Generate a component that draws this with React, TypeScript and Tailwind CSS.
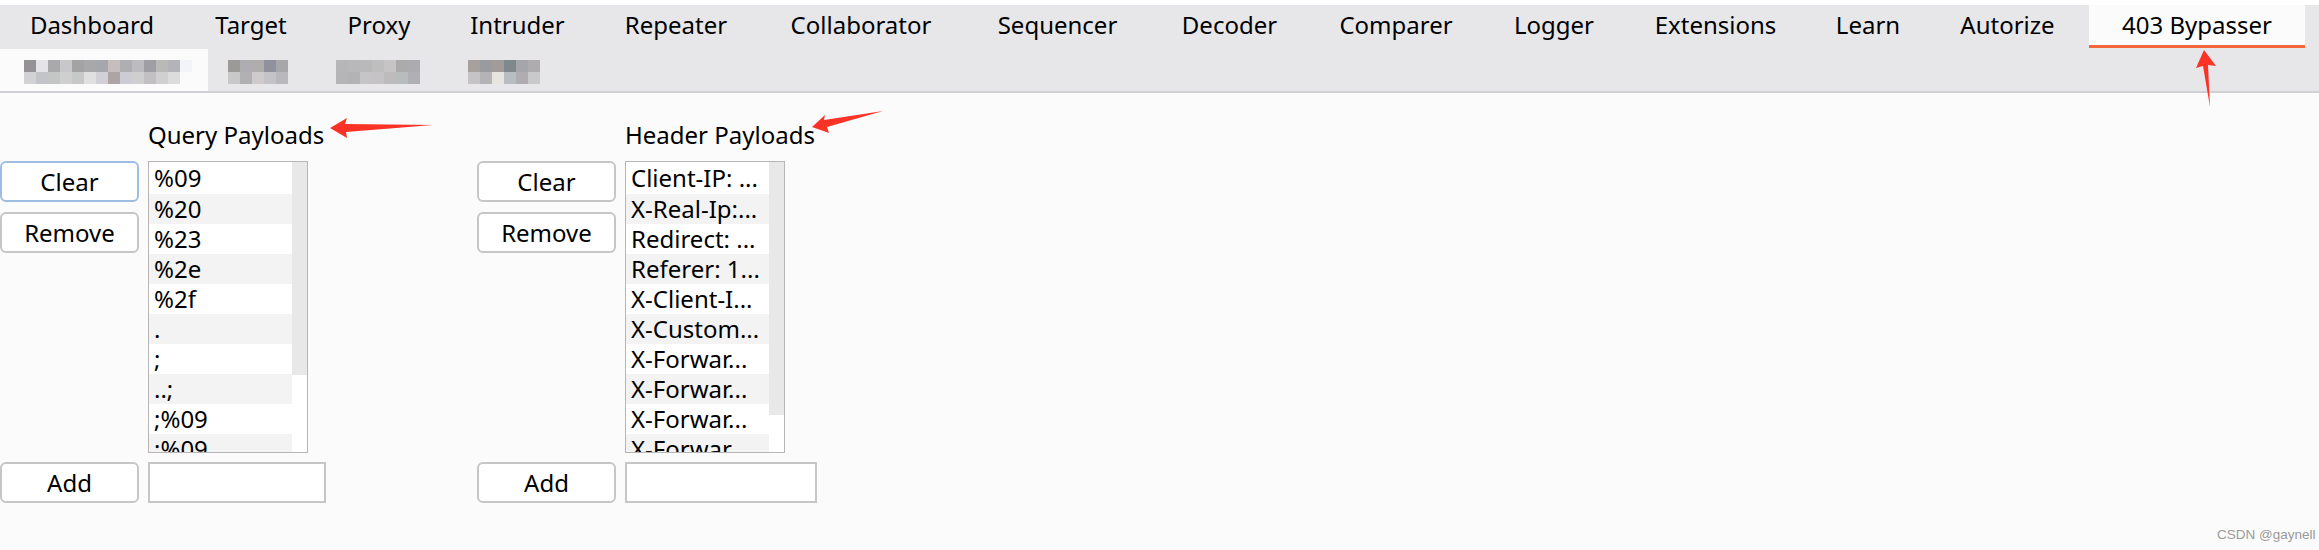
const font = "font-['Noto_Sans',sans-serif]";
const tabs: [string, string][] = [
  ["Dashboard", "w-[184px]"], ["Target", "w-[134px]"], ["Proxy", "w-[122px]"], ["Intruder", "w-[155px]"],
  ["Repeater", "w-[162px]"], ["Collaborator", "w-[208px]"], ["Sequencer", "w-[185px]"], ["Decoder", "w-[159px]"],
  ["Comparer", "w-[174px]"], ["Logger", "w-[142px]"], ["Extensions", "w-[181px]"], ["Learn", "w-[124px]"], ["Autorize", "w-[155px]"],
];
const query = ["%09", "%20", "%23", "%2e", "%2f", ".", ";", "..;", ";%09", ";%09"];
const header = ["Client-IP: ...", "X-Real-Ip:...", "Redirect: ...", "Referer: 1...", "X-Client-I...", "X-Custom...", "X-Forwar...", "X-Forwar...", "X-Forwar...", "X-Forwar"];

function Btn({ label, focus }: { label: string; focus?: boolean }) {
  return (
    <button className={focus
      ? "w-[139px] h-[41px] bg-white border-2 border-[#9dbde3] rounded-[6px] text-[24px] leading-none text-black"
      : "w-[139px] h-[41px] bg-white border-2 border-[#c8c5c6] rounded-[6px] text-[24px] leading-none text-black"}>
      {label}
    </button>
  );
}

function Panel({ title, items, focus, inputW, scroll }: { title: string; items: string[]; focus?: boolean; inputW: string; scroll: string }) {
  return (
    <div className="flex flex-col">
      <div className="ml-[148px] h-[68px] pt-[23px] text-[24px] leading-[38px] text-black whitespace-nowrap">{title}</div>
      <div className="flex gap-[9px]">
        <div className="flex flex-col gap-[10px] h-[292px]">
          <Btn label="Clear" focus={focus} />
          <Btn label="Remove" />
        </div>
        <div className="w-[160px] h-[292px] border border-[#b9b5b7] bg-white flex overflow-hidden">
          <div className="w-[143px] h-full overflow-hidden shrink-0">
            {items.map((t, i) => (
              <div key={i} className={i % 2 ? "h-[30px] bg-[#f3f3f3] pl-[5px] text-[24px] leading-[30px] text-black whitespace-nowrap" : "h-[30px] first:h-[32px] first:pt-[1px] bg-white pl-[5px] text-[24px] leading-[30px] text-black whitespace-nowrap"}>{t}</div>
            ))}
          </div>
          <div className="flex-1"><div className={scroll + " bg-[#e8e8e9]"} /></div>
        </div>
      </div>
      <div className="flex gap-[9px] mt-[9px]">
        <Btn label="Add" />
        <div className={inputW + " h-[41px] bg-white border-2 border-[#c8c5c6]"} />
      </div>
    </div>
  );
}

function Mosaic({ cols, cells }: { cols: string; cells: string[] }) {
  return (
    <div className={cols + " grid auto-rows-[12px]"}>
      {cells.map((c, i) => <div key={i} style={{ background: c }} />)}
    </div>
  );
}

const m1 = ["#949295","#e3e3e8","#a9a8ab","#c8c8ca","#a3a3a3","#a8a8aa","#a6a7ac","#c4bfbd","#aeaeb3","#bcbcbe","#9f9ea3","#b9b9b8","#b3b3b8","#f3f4f9",
  "#d2d1d3","#c3c4c9","#c4c5c5","#cfcfd0","#c7c8c8","#e1e0e1","#d0d0d6","#aca5a4","#cccdd4","#cfcfd0","#c2c0c2","#d0d0d0","#dcdcdc","#fbfbfb"];
const m2 = ["#9b9a98","#aeaeb2","#b2adad","#8f929d","#a7a7a9","#c8c8c8","#b1b1b3","#cfcbcc","#c3c3c8","#b9b9bb"];
const m3 = ["#b6b6b8","#b8b8ba","#b9b9bc","#bebebf","#c6c4c5","#ababac","#acacb0","#b5b5b7","#b3b3b5","#c5c5c7","#c5c3c5","#bdbbbb","#b8bcbc","#b0b0b4"];
const m4 = ["#a6a19f","#999b9f","#a29c98","#7f888c","#a5a6ab","#afacb0","#c5c3c5","#b4b4b6","#e8e5e1","#b8bdc2","#b0adb0","#c9c9cb"];

export default function App() {
  return (
    <div className={font + " relative w-[2319px] h-[550px] overflow-hidden bg-[#fbfbfb] text-black"}>
      <div className="h-[5px] bg-white" />
      <div className="h-[88px] bg-[#e7e7ea] border-b-2 border-[#cfcfd4]">
        <div className="flex h-[44px]">
          {tabs.map(([t, w]) => (
            <div key={t} className={w + " h-[40px] flex items-center justify-center text-[24px] leading-none whitespace-nowrap"}>{t}</div>
          ))}
          <div className="ml-[4px] w-[216px] h-[43px] pb-[1px] bg-[#fbfbfb] border-b-[3px] border-[#f2663c] flex items-center justify-center text-[24px] leading-none whitespace-nowrap">403 Bypasser</div>
        </div>
        <div className="flex h-[42px]">
          <div className="w-[208px] bg-[#fbfbfb] pl-[24px] pt-[11px]"><Mosaic cols="grid-cols-[repeat(14,12px)]" cells={m1} /></div>
          <div className="ml-[20px] pt-[11px]"><Mosaic cols="grid-cols-[repeat(5,12px)]" cells={m2} /></div>
          <div className="ml-[48px] pt-[11px]"><Mosaic cols="grid-cols-[repeat(7,12px)]" cells={m3} /></div>
          <div className="ml-[48px] pt-[11px]"><Mosaic cols="grid-cols-[repeat(6,12px)]" cells={m4} /></div>
        </div>
      </div>
      <div className="flex">
        <Panel title="Query Payloads" items={query} focus inputW="w-[178px]" scroll="h-[213px]" />
        <div className="ml-[151px]"><Panel title="Header Payloads" items={header} inputW="w-[192px]" scroll="h-[253px]" /></div>
      </div>
      <div className="absolute left-[2217px] top-[528px] text-[13.5px] leading-none text-[#9a9a9a] font-['Liberation_Sans',sans-serif]">CSDN @gaynell</div>
      <svg className="absolute left-0 top-0 pointer-events-none" width="2319" height="550">
        <polygon fill="#fb3326" points="330,128 347,118 345,124 433,125 346,132 347,138" />
        <polygon fill="#fb3326" points="812,127 825,115 824,120 883,111 827,127 829,133" />
        <polygon fill="#fb3326" points="2204,50 2216,66 2208,65 2210,107 2203,66 2196,68" />
      </svg>
    </div>
  );
}
